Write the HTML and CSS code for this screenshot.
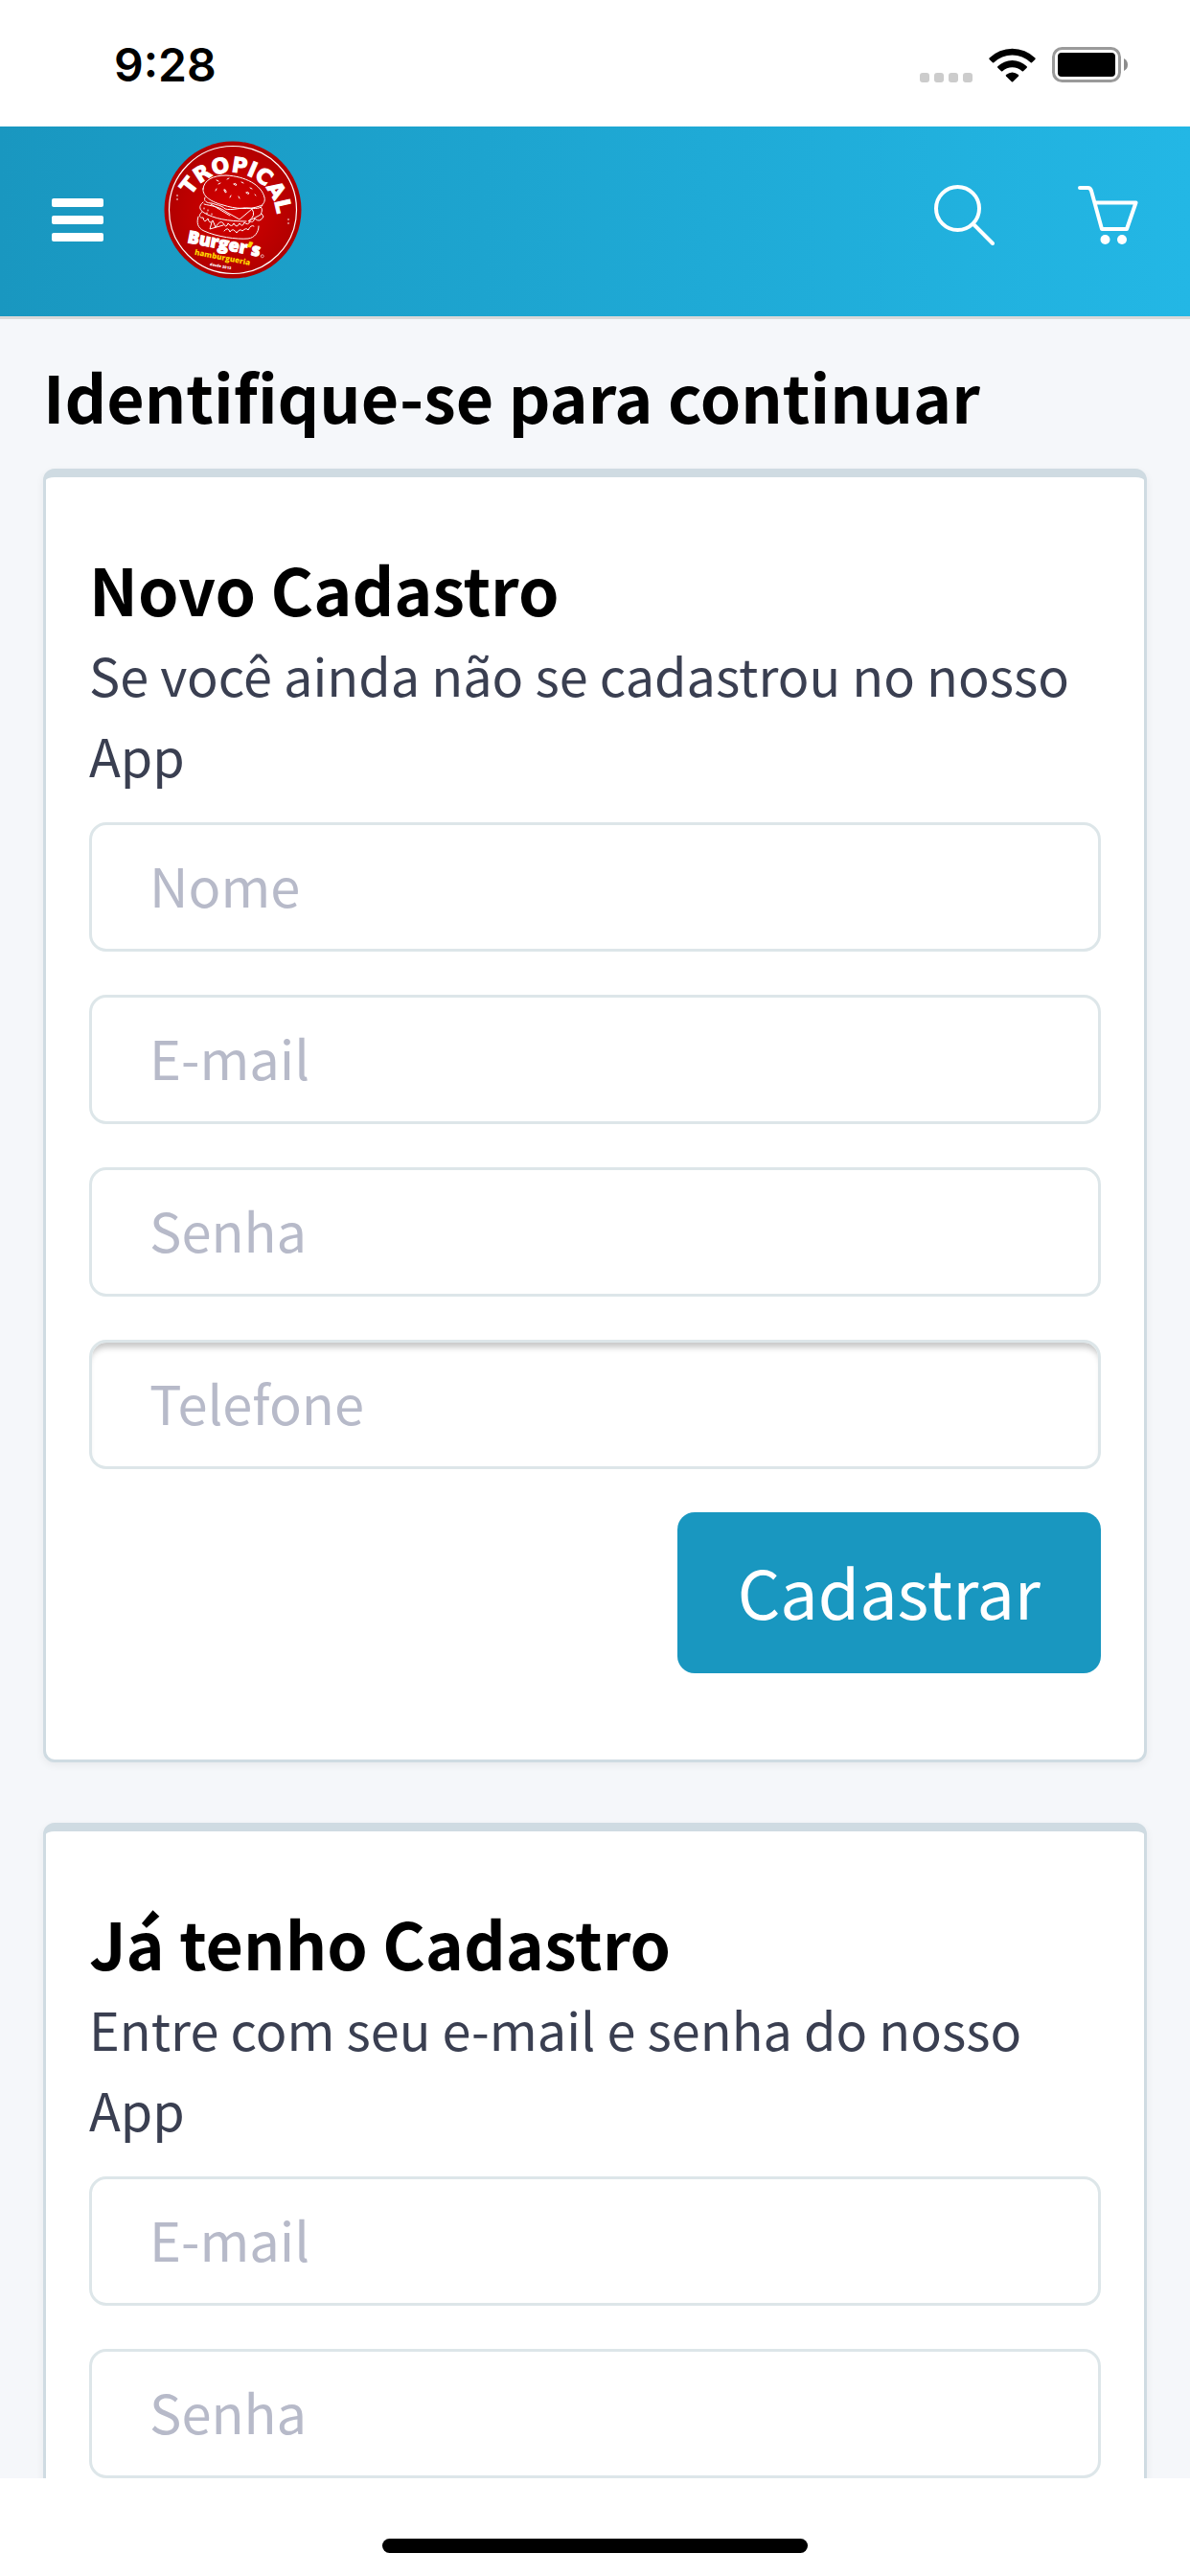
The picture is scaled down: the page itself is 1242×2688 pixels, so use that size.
FILE: index.html
```html
<!DOCTYPE html>
<html lang="pt-BR">
<head>
    <meta charset="UTF-8">
    <meta name="viewport" content="width=device-width, initial-scale=1.0">
    <title>Tropical Burger's</title>
    <link rel="stylesheet" href="styles.css">
</head>
<body>
    <div class="statusbar">
        <span class="clock">9:28</span>
        <div class="status-icons">
            <svg class="signal" viewBox="0 0 55 36" width="55" height="36">
                <rect x="0" y="26" width="10" height="10" rx="3"/>
                <rect x="15" y="26" width="10" height="10" rx="3"/>
                <rect x="30" y="26" width="10" height="10" rx="3"/>
                <rect x="45" y="26" width="10" height="10" rx="3"/>
            </svg>
            <svg class="wifi" viewBox="0 0 49 36" width="49" height="36">
                <path d="M0.6 10.6 A34 34 0 0 1 48.4 10.6 Q49 11.300 48.4 12 L45 15.300 Q44.400 15.800 43.700 15.200 A27.500 27.500 0 0 0 5.300 15.200 Q4.600 15.800 4 15.300 L0.600 12 Q0 11.300 0.600 10.600Z"/>
                <path d="M9.300 19.300 A21.500 21.500 0 0 1 39.700 19.300 Q40.300 20 39.700 20.700 L36 24.300 Q35.400 24.800 34.700 24.200 A15 15 0 0 0 14.300 24.200 Q13.600 24.800 13 24.300 L9.300 20.700 Q8.700 20 9.300 19.300Z"/>
                <path d="M18 28 Q24.500 23 31 28 Q31.600 28.700 31 29.400 L25.200 35.200 Q24.500 35.800 23.800 35.200 L18 29.400 Q17.400 28.700 18 28Z"/>
            </svg>
            <svg class="battery" viewBox="0 0 80 37" width="80" height="37">
                <rect x="1.500" y="1.500" width="69" height="34" rx="9" fill="none" stroke="#9a9a9a" stroke-width="3"/>
                <rect x="6" y="6" width="60" height="25" rx="4"/>
                <path d="M75 12 Q79 14 79 18.500 Q79 23 75 25Z" fill="#8c8c8c"/>
            </svg>
        </div>
    </div>

    <header class="navbar">
        <button class="menu-btn" type="button" aria-label="Menu">
            <span></span>
            <span></span>
            <span></span>
        </button>
        <a class="logo" href="#" aria-label="Tropical Burger's">
            <svg viewBox="11 12 144 144" width="144" height="144">
                <defs>
                    <radialGradient id="red">
                        <stop offset="0" stop-color="#d60000"/>
                        <stop offset="1" stop-color="#b00000"/>
                    </radialGradient>
                    <path id="arc" d="M37 74 A48 48 0 0 1 129 97"/>
                </defs>
                <circle cx="83" cy="84" r="71.500" fill="url(#red)"/>
                <circle cx="83" cy="84" r="66.500" fill="none" stroke="#fff" stroke-width="1.200"/>
                <text class="logo-tropical"><textPath href="#arc" startOffset="5">TROPICAL</textPath></text>
                <!-- burger -->
                <g fill="none" stroke="#fff" stroke-width="1" stroke-linecap="round" stroke-linejoin="round">
                    <path d="M52 62 C53 53 62 48 76 48 C96 49 113 58 116 71 C117 75 115 79 111 80 C101 84 85 83 73 79 C61 76 51 70 52 62Z"/>
                    <path d="M54 71 C52 75 56 77 61 77 C66 79 71 79 75 83 C82 85 93 81 99 82 C106 83 113 83 114 79"/>
                    <path d="M53 78 C60 80 68 80 76 86 L90 94 L103 83"/>
                    <path d="M60 78 L80 90 M103 83 Q108 90 99 96 L112 89 Q115 83 112 81"/>
                    <path d="M52 76 C47 80 48 84 53 87 C63 93 78 96 97 96"/>
                    <path d="M51 86 C46 90 49 93 52 92 Q53 99 57 93 Q59 100 62 95 L65 102 Q70 94 73 98 Q76 104 78 98 Q82 103 84 98 Q87 104 90 98 Q93 103 95 97 Q99 101 101 96 Q104 98 106 93 Q111 98 115 91 L113 88"/>
                    <path d="M47 91 C45 97 46 103 53 106 C66 112 87 115 99 114 C106 113 110 107 110 101"/>
                    <path d="M61 97 L59 104 L73 100 M74 106 Q78 101 80 107 Q83 102 87 108 Q90 103 93 106 Q97 102 99 105 Q102 99 105 101"/>
                    <path d="M66 53 l2 1 M77 52 l2 -1 M68 57 l2 -1 M84 57 q2 -2 3 1 q-2 1 -3 -1 M92 55 l2 1 M101 61 l2 1 M65 64 l1 -2 M74 63 q2 -1 2 3 q-2 0 -2 -3 M80 71 l1 -2 M89 70 l1 2 M97 66 q2 -2 3 1 q-2 1 -3 -1 M106 68 l1 1"/>
                    <path d="M53 82 v1 M57 84 v1 M56 87 v1 M61 88 v1"/>
                </g>
                <g transform="rotate(11 35 118)">
                    <text class="logo-burger" x="35" y="118">Burger<tspan class="yellow">’</tspan>s</text>
                    <circle cx="115" cy="117" r="1.500" fill="none" stroke="#fff" stroke-width="0.600"/>
                    <text class="logo-sub" x="45" y="129">hamburgueria</text>
                    <text class="logo-since" x="63" y="137">desde 2013</text>
                </g>
                <path d="M25 68 v2 M25 72 v2 M141 93 v2 M141 97 v2" stroke="#fff" stroke-width="1.500" opacity="0.600"/>
            </svg>
        </a>
        <nav class="actions">
            <a href="#" aria-label="Buscar">
                <svg viewBox="0 0 63 63" width="63" height="63" fill="none" stroke="#fff" stroke-width="4" stroke-linecap="round">
                    <circle cx="24.500" cy="24.500" r="22.500"/>
                    <path d="M41.500 41.500 L61 61"/>
                </svg>
            </a>
            <a href="#" aria-label="Carrinho">
                <svg viewBox="0 0 63 63" width="63" height="63" fill="none" stroke="#fff" stroke-width="4" stroke-linecap="round" stroke-linejoin="round">
                    <path d="M2 3 H10.500 Q13 3 14 6 L25 46 H51 L60.500 18.500 H18"/>
                    <circle cx="28.500" cy="57" r="5" fill="#fff" stroke="none"/>
                    <circle cx="46" cy="57" r="5" fill="#fff" stroke="none"/>
                </svg>
            </a>
        </nav>
    </header>

    <main class="content">
        <h1>Identifique-se para continuar</h1>

        <form class="panel">
            <h2>Novo Cadastro</h2>
            <p>Se você ainda não se cadastrou no nosso App</p>
            <div class="fields">
                <input type="text" placeholder="Nome" aria-label="Nome">
                <input type="email" placeholder="E-mail" aria-label="E-mail">
                <input type="password" placeholder="Senha" aria-label="Senha">
                <input class="phone" type="tel" placeholder="Telefone" aria-label="Telefone">
                <button class="btn" type="button">Cadastrar</button>
            </div>
        </form>

        <form class="panel">
            <h2>Já tenho Cadastro</h2>
            <p>Entre com seu e-mail e senha do nosso App</p>
            <div class="fields">
                <input type="email" placeholder="E-mail" aria-label="E-mail">
                <input type="password" placeholder="Senha" aria-label="Senha">
            </div>
        </form>
    </main>

    <div class="homebar"><span></span></div>
</body>
</html>
```
FILE: styles.css
```css
* {
    box-sizing: border-box;
}

body {
    font-family: 'Noto Sans CJK SC', 'Noto Sans', sans-serif;
    margin: 0;
    height: 100vh;
    display: flex;
    flex-direction: column;
    background-color: #f5f7fa;
    color: #3a3f51;
}

/* Status bar */
.statusbar {
    flex: none;
    height: 132px;
    padding: 3px 64px 0 119px;
    display: flex;
    align-items: center;
    justify-content: space-between;
    background-color: #fff;
    color: #000;
}

.clock {
    font-family: Inter, sans-serif;
    font-size: 48px;
    font-weight: 600;
    line-height: 60px;
}

.status-icons {
    display: flex;
    align-items: center;
    gap: 17px;
}

.signal {
    fill: #ccc;
}

/* Navbar */
.navbar {
    flex: none;
    height: 201px;
    padding: 15px 54px 0;
    display: flex;
    align-items: flex-start;
    background: linear-gradient(to right, #1997c0, #23b7e5);
    border-bottom: 3px solid #d9d9d9;
}

.menu-btn {
    width: 54px;
    padding: 0;
    margin-top: 60px;
    display: flex;
    flex-direction: column;
    gap: 9px;
    background: none;
    border: none;
}

.menu-btn span {
    height: 9px;
    border-radius: 2px;
    background-color: #fff;
}

.logo {
    margin-left: 63px;
}

.logo svg,
.actions svg {
    display: block;
}

.logo text {
    fill: #fff;
    font-family: 'Open Sans', sans-serif;
    font-weight: 800;
}

.logo .logo-tropical {
    font-family: 'DejaVu Sans', sans-serif;
    font-size: 22px;
    font-weight: 700;
    stroke: #fff;
    stroke-width: 1px;
}

.logo .logo-burger {
    font-size: 18px;
    stroke: #fff;
    stroke-width: 1px;
}

.logo .logo-sub {
    font-size: 8px;
}

.logo .logo-since {
    font-size: 4px;
}

.logo .logo-sub,
.logo .yellow {
    fill: #ffd400;
}

.logo .yellow {
    stroke: #ffd400;
}

.actions {
    margin-left: auto;
    margin-top: 46px;
    display: flex;
    gap: 87px;
}

/* Content */
.content {
    flex: 1;
    min-height: 0;
    overflow: hidden;
    padding: 41px 45px 0;
}

h1,
h2 {
    margin: 0;
    color: #000;
    font-size: 68px;
    font-weight: 600;
    line-height: 77px;
}

h1 {
    margin-bottom: 38px;
}

.panel {
    margin-bottom: 63px;
    padding: 77px 45px 90px;
    background-color: #fff;
    border: 3px solid #cfdbe2;
    border-top-width: 9px;
    border-radius: 12px;
    box-shadow: 0 3px 9px rgba(0, 0, 0, 0.06);
}

.panel p {
    margin: 10px 0 28px;
    font-size: 54px;
    line-height: 84px;
}

.fields {
    display: flex;
    flex-direction: column;
    gap: 45px;
}

.fields input {
    width: 100%;
    height: 135px;
    padding: 0 60px 6px;
    border: 3px solid #dde6e9;
    border-radius: 18px;
    background-color: #fff;
    color: #3a3f51;
    font-family: inherit;
    font-size: 56px;
}

.fields input::placeholder {
    color: #b7bac9;
    opacity: 1;
}

.fields .phone {
    box-shadow: inset 0 9px 6px -4px rgba(0, 0, 0, 0.22);
}

.btn {
    align-self: flex-end;
    height: 168px;
    padding: 0 63px 6px;
    border: none;
    border-radius: 18px;
    background-color: #1997c0;
    color: #fff;
    font-family: inherit;
    font-size: 70px;
}

/* Home indicator */
.homebar {
    flex: none;
    height: 102px;
    padding-top: 63px;
    background-color: #fff;
}

.homebar span {
    display: block;
    width: 444px;
    height: 15px;
    margin: 0 auto;
    border-radius: 8px;
    background-color: #000;
}
```
